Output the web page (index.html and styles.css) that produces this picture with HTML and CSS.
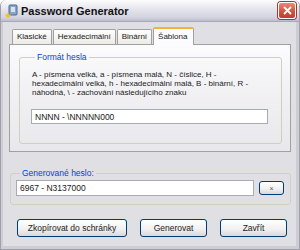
FILE: index.html
```html
<!DOCTYPE html>
<html lang="cs">
<head>
    <meta charset="UTF-8">
    <title>Password Generator</title>
    <link rel="stylesheet" href="styles.css">
</head>
<body>
    <div class="window">
        <div class="titlebar">
            <svg class="app-icon" width="14" height="14" viewBox="0 0 14 14">
                <rect x="4" y="1" width="8" height="10" rx="1" fill="#8aa4c8" stroke="#4a6a94"/>
                <rect x="6" y="3" width="4" height="5" fill="#d6e2f2"/>
                <polygon points="3,8 4,10.5 6.5,10.7 4.6,12.2 5.2,14 3,13 0.8,14 1.4,12.2 -0.5,10.7 2,10.5" fill="#f4c020"/>
            </svg>
            <span class="title">Password Generator</span>
            <div class="close-btn">
                <svg width="9" height="9" viewBox="0 0 9 9"><path d="M1 1 L8 8 M8 1 L1 8" stroke="#fff" stroke-width="1.8"/></svg>
            </div>
        </div>

        <div class="client">
            <!-- Záložky -->
            <div class="tabs">
                <div class="tab">Klasické</div>
                <div class="tab">Hexadecimální</div>
                <div class="tab">Binární</div>
                <div class="tab active">Šablona</div>
            </div>
            <div class="tab-panel">
                <fieldset class="group">
                    <legend>Formát hesla</legend>
                    <p class="desc">A - písmena velká, a - písmena malá, N - číslice, H - hexadecimální velká, h - hexadecimální malá, B - binární, R - náhodná, \ - zachování následujícího znaku</p>
                    <div class="textbox pattern">NNNN - \NNNNN000</div>
                </fieldset>
            </div>

            <!-- Výsledek -->
            <fieldset class="group result">
                <legend>Generované heslo:</legend>
                <div class="result-row">
                    <div class="textbox output">6967 - N3137000</div>
                    <div class="button small">×</div>
                </div>
            </fieldset>

            <div class="buttons">
                <div class="button copy">Zkopírovat do schránky</div>
                <div class="button gen">Generovat</div>
                <div class="button close">Zavřít</div>
            </div>
        </div>
    </div>
</body>
</html>
```

FILE: styles.css
```css
/* Okno */
body {
    margin: 0;
    font-family: "Liberation Sans", Arial, sans-serif;
    font-size: 8px;
    color: #1a1a1a;
    background: #fff;
}
.window {
    width: 300px;
    height: 250px;
    box-sizing: border-box;
    display: flex;
    flex-direction: column;
    background: #e0dfe3;
    border: 1px solid #a0a0aa;
    border-top: none;
    border-radius: 6px 6px 0 0;
    overflow: hidden;
}

/* Titulek */
.titlebar {
    height: 22px;
    flex: none;
    display: flex;
    align-items: center;
    padding: 0 3px 0 4px;
    background: linear-gradient(#fdfdfe, #e6e6ee 40%, #d2d2de 85%, #bcbccb);
    border-bottom: 1px solid #a8a8b8;
    box-sizing: border-box;
}
.app-icon {
    margin-right: 2px;
}
.title {
    flex: 1;
    font-weight: bold;
    font-size: 11px;
    color: #111;
}
.close-btn {
    width: 16px;
    height: 15px;
    display: flex;
    align-items: center;
    justify-content: center;
    border: 1px solid #fff;
    border-radius: 3px;
    background: linear-gradient(#e88a78, #d0503c 60%, #c13f2c);
    box-shadow: 0 0 0 1px #9a3a30;
}

.client {
    flex: 1;
    display: flex;
    flex-direction: column;
    padding: 6px 5px 0 6px;
    border-left: 2px solid #cdcdd6;
    border-right: 3px solid #cdcdd6;
    border-bottom: 3px solid #cdcdd6;
}

/* Záložky */
.tabs {
    display: flex;
    align-items: flex-end;
    padding-left: 3px;
    height: 16px;
}
.tab {
    height: 14px;
    line-height: 14px;
    padding: 0 4px;
    font-size: 8px;
    background: linear-gradient(#fefefe, #ecebe6);
    border: 1px solid #a0a0a0;
    border-bottom: none;
    border-radius: 2px 2px 0 0;
    margin-right: 1px;
}
.tab.active {
    height: 16px;
    line-height: 15px;
    padding: 0 6px 0 4px;
    background: #fcfcfe;
    border-top: 2px solid #f5b334;
    position: relative;
    top: 1px;
}
.tab-panel {
    height: 108px;
    border: 1px solid #a0a0a0;
    background: linear-gradient(#fcfcfe, #f2f2f4 40%, #e8e8ec);
    padding: 7px 8px 0 9px;
    box-sizing: border-box;
}

/* Skupiny */
.group {
    margin: 0;
    border: 1px solid #d0d0bf;
    border-radius: 3px;
    padding: 0 13px 0 11px;
}
.group legend {
    color: #0046d5;
    padding: 0 2px;
    margin-left: 4px;
    font-size: 8.5px;
}
.tab-panel .group {
    height: 92px;
    box-sizing: border-box;
}
.desc {
    margin: 8px 0 0 1px;
    line-height: 9px;
    height: 39px;
}
.textbox {
    height: 15px;
    line-height: 14px;
    box-sizing: border-box;
    background: #fff;
    border: 1px solid #a5acb5;
    padding-left: 3px;
    font-size: 8.5px;
}
.result {
    margin-top: 16px;
    height: 37px;
    box-sizing: border-box;
    padding: 0 6px 0 5px;
    margin-left: 1px;
}
.result-row {
    display: flex;
    align-items: center;
    gap: 5px;
    margin-top: 2px;
}
.output {
    flex: 1;
    height: 16px;
    line-height: 15px;
}

/* Tlačítka */
.button {
    display: flex;
    align-items: center;
    justify-content: center;
    box-sizing: border-box;
    border: 1px solid #003c74;
    border-radius: 3px;
    background: linear-gradient(#ffffff, #f0f0f0 60%, #d8d8de);
    font-size: 8.5px;
}
.button.small {
    width: 25px;
    height: 14px;
    font-size: 7px;
    color: #555;
}
.buttons {
    display: flex;
    margin-top: 14px;
    padding-left: 8px;
    gap: 13px;
}
.buttons .button {
    height: 18px;
}
.copy {
    width: 110px;
}
.gen {
    width: 67px;
}
.close {
    width: 67px;
}
```
